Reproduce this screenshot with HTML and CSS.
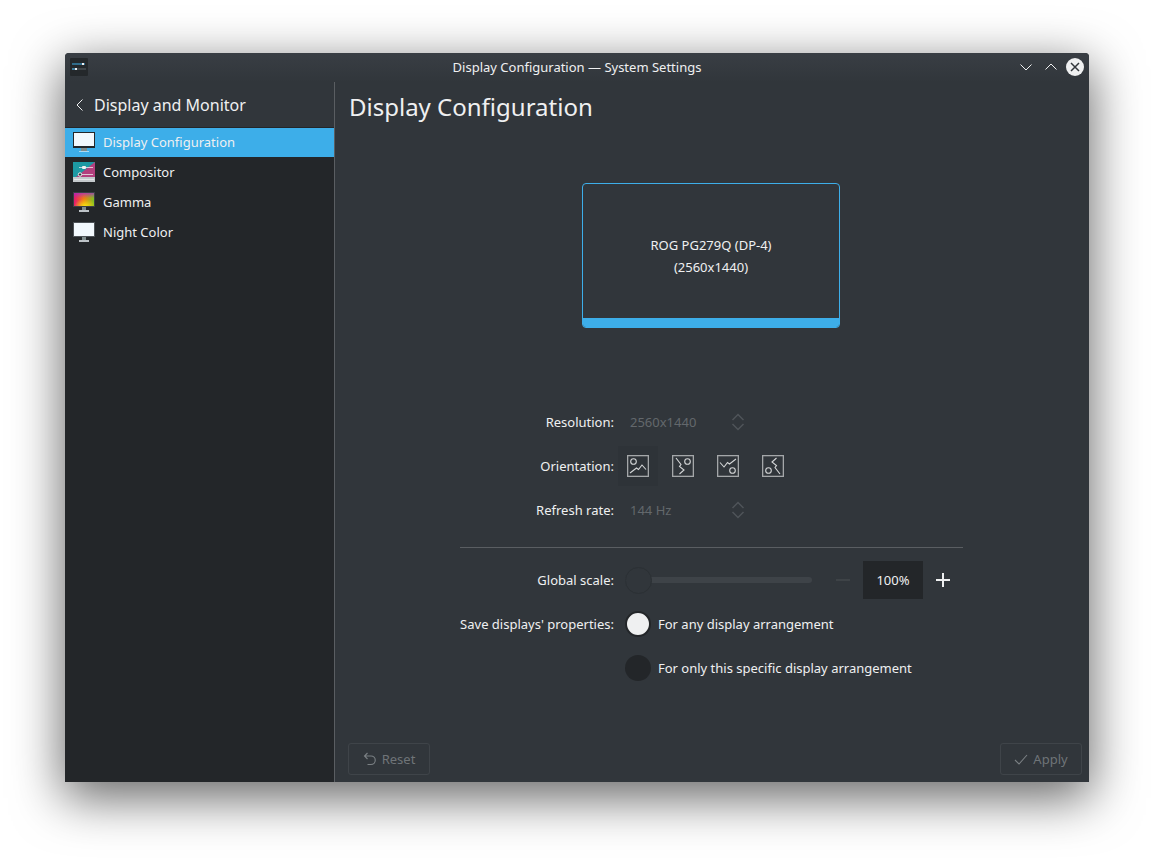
FILE: index.html
```html
<!DOCTYPE html>
<html lang="en">
<head>
<meta charset="utf-8">
<title>Display Configuration — System Settings</title>
<link rel="stylesheet" href="styles.css">
</head>
<body>
<div class="window">
  <header class="titlebar">
    <svg class="app-icon" width="18" height="18" viewBox="0 0 18 18">
      <rect width="18" height="18" rx="1" fill="#24282b"/>
      <path d="M2 6h13" stroke="#3daee9" stroke-width="1"/>
      <path d="M2 11h14" stroke="#5b6268" stroke-width="1"/>
      <path d="M2 11h5" stroke="#3daee9" stroke-width="1"/>
      <rect x="12" y="5" width="2" height="2" fill="#eff0f1"/>
      <rect x="5" y="10" width="2" height="2" fill="#eff0f1"/>
    </svg>
    <span class="title">Display Configuration — System Settings</span>
    <div class="win-buttons">
      <svg width="14" height="14" viewBox="0 0 14 14"><path d="M1.500 4.500 7 10l5.500-5.500" fill="none" stroke="#eff0f1" stroke-width="1"/></svg>
      <svg width="14" height="14" viewBox="0 0 14 14"><path d="M1.500 9.500 7 4l5.500 5.500" fill="none" stroke="#eff0f1" stroke-width="1"/></svg>
      <svg class="close" width="18" height="18" viewBox="0 0 18 18"><circle cx="9" cy="9" r="9" fill="#eff0f1"/><path d="M5 5l8 8M13 5l-8 8" stroke="#31363b" stroke-width="1.500"/></svg>
    </div>
  </header>
  <div class="body">
    <aside class="sidebar">
      <div class="side-head">
        <svg width="10" height="14" viewBox="0 0 10 14"><path d="M7.500 1.500 2 7l5.500 5.500" fill="none" stroke="#eff0f1" stroke-width="1"/></svg>
        <span>Display and Monitor</span>
      </div>
      <ul class="side-list">
        <li class="side-item active">
          <svg class="side-icon" width="22" height="20" viewBox="0 0 22 20">
            <rect width="22" height="16" fill="#232629"/><rect x="1" y="1" width="20" height="13" fill="#f2f8fd"/><rect x="8" y="16" width="6" height="3" fill="#7f8c8d"/><rect x="6" y="19" width="10" height="1" fill="#a9d9f3"/>
          </svg>
          <span>Display Configuration</span>
        </li>
        <li class="side-item">
          <svg class="side-icon" width="22" height="20" viewBox="0 0 22 20">
            <rect width="22" height="15" fill="#1d99a3"/><path d="M22 0v15H3z" fill="#b3407e"/><rect y="15" width="22" height="5" fill="#c4c9cc"/><path d="M1 17.500h20" stroke="#e3e6e8"/><path d="M6 5.500h14M6 12.500h14" stroke="#eff0f1" stroke-opacity=".75" stroke-width="1"/><rect x="9" y="4" width="4" height="3" rx="1" fill="#eff0f1"/><circle cx="7" cy="12.500" r="1.700" fill="#31363b" stroke="#eff0f1"/>
          </svg>
          <span>Compositor</span>
        </li>
        <li class="side-item">
          <svg class="side-icon" width="22" height="20" viewBox="0 0 22 20">
            <defs>
              <linearGradient id="gam" x1="0" x2="1" y1="0" y2="0"><stop offset="0" stop-color="#e5176f"/><stop offset=".5" stop-color="#f07c12"/><stop offset="1" stop-color="#7cc122"/></linearGradient>
              <linearGradient id="gam-top" x1="0" x2="0" y1="0" y2="1"><stop offset="0" stop-color="#a32ac8" stop-opacity=".75"/><stop offset=".4" stop-color="#a32ac8" stop-opacity="0"/></linearGradient>
              <radialGradient id="gam-bottom" cx=".55" cy="1" r=".55"><stop offset="0" stop-color="#f5e90f" stop-opacity=".95"/><stop offset="1" stop-color="#f5e90f" stop-opacity="0"/></radialGradient>
            </defs>
            <rect width="22" height="15" fill="#3a3f44"/><rect x="1" y="1" width="20" height="13" fill="url(#gam)"/><rect x="1" y="1" width="20" height="13" fill="url(#gam-top)"/><rect x="1" y="1" width="20" height="13" fill="url(#gam-bottom)"/><rect x="9" y="15" width="4" height="3" fill="#7f8c8d"/><rect x="6" y="18" width="10" height="2" fill="#bdc3c7"/>
          </svg>
          <span>Gamma</span>
        </li>
        <li class="side-item">
          <svg class="side-icon" width="22" height="20" viewBox="0 0 22 20">
            <rect width="22" height="15" fill="#4d5257"/><rect x="1" y="1" width="20" height="13" fill="#f2f8fd"/><rect x="9" y="15" width="4" height="3" fill="#7f8c8d"/><rect x="6" y="18" width="10" height="2" fill="#bdc3c7"/>
          </svg>
          <span>Night Color</span>
        </li>
      </ul>
    </aside>
    <main class="main">
      <h1 class="page-title">Display Configuration</h1>
      <div class="arrangement">
        <div class="monitor">
          <div class="monitor-text">ROG PG279Q (DP-4)<br>(2560x1440)</div>
          <div class="monitor-bar"></div>
        </div>
      </div>
      <div class="form">
        <div class="row">
          <span class="label">Resolution:</span>
          <div class="combo"><span>2560x1440</span>
            <svg width="14" height="20" viewBox="0 0 14 20"><path d="M1.500 8 7 2.500 12.500 8M1.500 12 7 17.500 12.500 12" fill="none" stroke="#4f5459" stroke-width="1.500"/></svg>
          </div>
        </div>
        <div class="row">
          <span class="label">Orientation:</span>
          <div class="orient">
            <div class="orient-btn selected">
              <svg width="22" height="22" viewBox="0 0 22 22"><rect x=".65" y=".65" width="20.700" height="20.700" fill="none" stroke="#a4a7a9" stroke-width="1.300"/><g fill="none" stroke="#d5d7d8" stroke-width="1.100"><circle cx="6.500" cy="6.500" r="2.800"/><path d="M3 18l6.500-5 2 1.500 3.500-4.500 4 4.500"/></g></svg>
            </div>
            <div class="orient-btn">
              <svg width="22" height="22" viewBox="0 0 22 22"><rect x=".65" y=".65" width="20.700" height="20.700" fill="none" stroke="#a4a7a9" stroke-width="1.300"/><g fill="none" stroke="#d5d7d8" stroke-width="1.100" transform="rotate(90 11 11)"><circle cx="6.500" cy="6.500" r="2.800"/><path d="M3 18l6.500-5 2 1.500 3.500-4.500 4 4.500"/></g></svg>
            </div>
            <div class="orient-btn">
              <svg width="22" height="22" viewBox="0 0 22 22"><rect x=".65" y=".65" width="20.700" height="20.700" fill="none" stroke="#a4a7a9" stroke-width="1.300"/><g fill="none" stroke="#d5d7d8" stroke-width="1.100" transform="rotate(180 11 11)"><circle cx="6.500" cy="6.500" r="2.800"/><path d="M3 18l6.500-5 2 1.500 3.500-4.500 4 4.500"/></g></svg>
            </div>
            <div class="orient-btn">
              <svg width="22" height="22" viewBox="0 0 22 22"><rect x=".65" y=".65" width="20.700" height="20.700" fill="none" stroke="#a4a7a9" stroke-width="1.300"/><g fill="none" stroke="#d5d7d8" stroke-width="1.100" transform="rotate(270 11 11)"><circle cx="6.500" cy="6.500" r="2.800"/><path d="M3 18l6.500-5 2 1.500 3.500-4.500 4 4.500"/></g></svg>
            </div>
          </div>
        </div>
        <div class="row">
          <span class="label">Refresh rate:</span>
          <div class="combo"><span>144 Hz</span>
            <svg width="14" height="20" viewBox="0 0 14 20"><path d="M1.500 8 7 2.500 12.500 8M1.500 12 7 17.500 12.500 12" fill="none" stroke="#4f5459" stroke-width="1.500"/></svg>
          </div>
        </div>
        <hr class="sep">
        <div class="row">
          <span class="label">Global scale:</span>
          <div class="scale">
            <div class="slider"><span class="slider-handle"></span></div>
            <svg class="minus" width="14" height="14" viewBox="0 0 14 14"><path d="M0 7h14" stroke="#43484d" stroke-width="1.500"/></svg>
            <div class="scale-value">100%</div>
            <svg class="plus" width="16" height="16" viewBox="0 0 16 16"><path d="M1 8h14M8 1v14" stroke="#eff0f1" stroke-width="2"/></svg>
          </div>
        </div>
        <div class="row">
          <span class="label">Save displays' properties:</span>
          <div class="radio-line"><span class="radio on"></span><span>For any display arrangement</span></div>
        </div>
        <div class="row">
          <span class="label"></span>
          <div class="radio-line"><span class="radio"></span><span>For only this specific display arrangement</span></div>
        </div>
      </div>
      <footer class="actions">
        <div class="btn">
          <svg width="14" height="14" viewBox="0 0 14 14"><path d="M4.500 1 1.500 4l3 3M2 4h6a4 4 0 0 1 0 8.500H4.500" fill="none" stroke="#7b8084" stroke-width="1.100"/></svg>
          <span>Reset</span>
        </div>
        <div class="btn">
          <svg width="14" height="14" viewBox="0 0 14 14"><path d="M1 8l4 4 8-9" fill="none" stroke="#7b8084" stroke-width="1.100"/></svg>
          <span>Apply</span>
        </div>
      </footer>
    </main>
  </div>
</div>
</body>
</html>
```
FILE: styles.css
```css
* { box-sizing: border-box; }
html, body { margin: 0; height: 100%; }
body {
  background: #fff;
  padding: 53px 65px 77px;
  font-family: "Noto Sans", sans-serif;
  font-size: 13px;
  color: #eff0f1;
  overflow: hidden;
}
.window {
  width: 1024px;
  height: 729px;
  display: flex;
  flex-direction: column;
  background: #31363b;
  border-radius: 4px 4px 0 0;
  box-shadow: 0 14px 50px 2px rgba(0, 0, 0, .6);
}
.titlebar {
  height: 29px;
  flex: none;
  display: grid;
  grid-template-columns: 1fr auto 1fr;
  align-items: center;
  padding: 0 5px 2px;
  background: linear-gradient(#393e44, #31363b);
  border-radius: 4px 4px 0 0;
}
.app-icon { display: block; }
.title { text-align: center; }
.win-buttons { display: flex; align-items: center; justify-content: flex-end; gap: 11px; }
.win-buttons svg { display: block; }
.win-buttons .close { margin-left: -3px; }
.body { flex: 1; display: flex; min-height: 0; }
.sidebar {
  width: 270px;
  flex: none;
  display: flex;
  flex-direction: column;
  background: #232629;
  border-right: 1px solid #5a5e62;
}
.side-head {
  height: 45px;
  flex: none;
  display: flex;
  align-items: center;
  gap: 9px;
  padding: 1px 0 0 10px;
  background: #31363b;
  font-size: 16px;
}
.side-list { list-style: none; margin: 0; padding: 0; }
.side-item { height: 30px; display: flex; align-items: center; gap: 8px; padding-left: 8px; }
.side-item.active { background: #3daee9; box-shadow: inset 0 1px #232629; }
.side-icon { display: block; }
.main { flex: 1; min-width: 0; display: flex; flex-direction: column; padding: 0 7px 0 14px; }
.page-title { margin: 8px 0 0; font-size: 24px; font-weight: 400; line-height: 34px; height: 34px; }
.arrangement { height: 276px; padding: 59px 0 0 233px; flex: none; }
.monitor {
  width: 258px;
  height: 145px;
  display: flex;
  flex-direction: column;
  border: 1px solid #3daee9;
  border-radius: 4px;
  overflow: hidden;
}
.monitor-text { flex: 1; display: flex; align-items: center; justify-content: center; text-align: center; line-height: 22px; padding-top: 9px; }
.monitor-bar { height: 9px; background: #3daee9; flex: none; margin: 0 -1px; }
.form { width: 503px; margin-left: 111px; display: flex; flex-direction: column; flex: none; }
.row { height: 44px; display: grid; grid-template-columns: 154px 1fr; column-gap: 10px; align-items: center; }
.label { text-align: right; }
.combo { display: flex; align-items: center; justify-content: space-between; width: 121px; padding-left: 6px; color: #63686c; }
.combo svg { display: block; }
.orient { display: flex; gap: 5px; margin-left: -6px; }
.orient-btn { width: 40px; height: 40px; display: flex; align-items: center; justify-content: center; }
.orient-btn.selected { background: #2e3338; }
.sep { margin: 15px 0 10px; border: 0; height: 1px; background: #5a5e62; flex: none; }
.scale { display: flex; align-items: center; padding-left: 1px; }
.slider { width: 187px; height: 6px; background: #3e4348; border-radius: 3px; display: flex; align-items: center; }
.slider-handle { width: 27px; height: 27px; border-radius: 50%; background: #31363b; border: 1px solid #2b3034; flex: none; }
.minus { margin-left: 24px; display: block; }
.scale-value { width: 60px; height: 38px; margin-left: 13px; background: #232629; display: flex; align-items: center; justify-content: center; }
.plus { margin-left: 12px; display: block; }
.radio-line { display: flex; align-items: center; gap: 7px; padding-left: 1px; }
.radio { width: 26px; height: 26px; border-radius: 50%; background: #232629; flex: none; }
.radio.on { background: #eff0f1; border: 2px solid #232629; }
.actions { margin-top: auto; height: 39px; padding-bottom: 7px; margin-left: -1px; display: flex; justify-content: space-between; flex: none; }
.btn { width: 82px; height: 32px; display: flex; align-items: center; justify-content: center; gap: 5px; border: 1px solid #3f4449; border-radius: 3px; color: #6f7478; }
.btn svg { display: block; }
```
